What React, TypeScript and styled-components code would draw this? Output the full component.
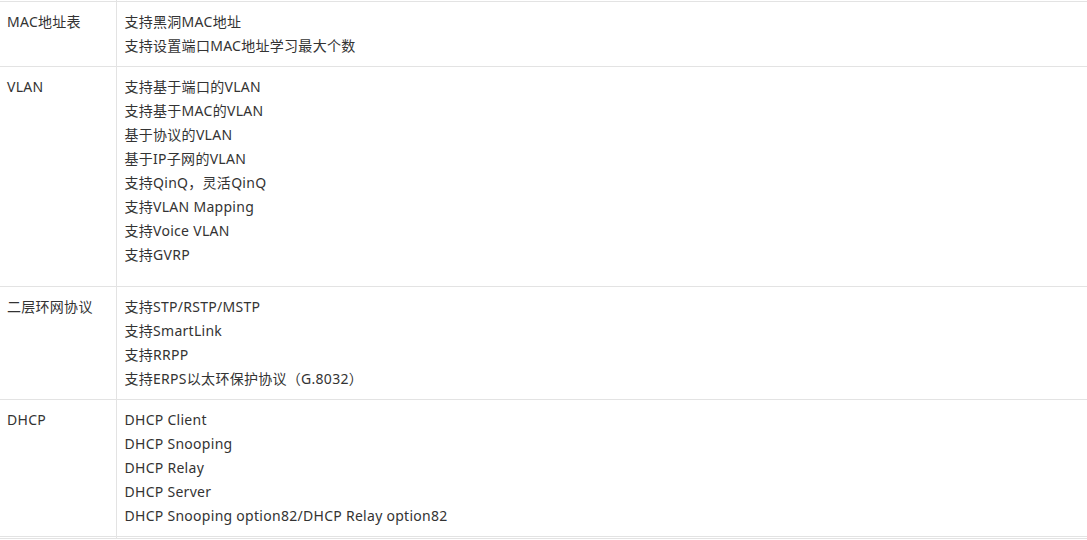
import styled, { createGlobalStyle } from "styled-components";

const GlobalStyle = createGlobalStyle`
  html, body {
    margin: 0;
    padding: 0;
    background: #fff;
  }
  body {
    font-family: "Noto Sans", "Noto Sans CJK SC", sans-serif;
    font-size: 14px;
    letter-spacing: 0.28px;
    color: #333;
  }
`;

const SpecTable = styled.table`
  width: 100%;
  margin-top: -1px;
  border-collapse: collapse;
  table-layout: fixed;
`;

const Row = styled.tr<{ $extra?: number }>`
  td {
    padding-bottom: ${(p) => 8 + (p.$extra ?? 0)}px;
  }
`;

const SpacerRow = styled.tr`
  height: 1px;
  td {
    padding: 0;
    height: 1px;
  }
`;

const NameCell = styled.td`
  width: 116px;
  box-sizing: border-box;
  padding: 8px 6px 8px 7px;
  vertical-align: top;
  line-height: 24px;
  border-top: 1px solid #e3e3e3;
  border-bottom: 1px solid #e3e3e3;
  border-right: 1px solid #e3e3e3;
`;

const ValueCell = styled.td`
  padding: 8px 8px 8px 8px;
  vertical-align: top;
  line-height: 24px;
  border-top: 1px solid #e3e3e3;
  border-bottom: 1px solid #e3e3e3;
`;

const Line = styled.div`
  white-space: nowrap;
`;

interface Spec {
  name: string;
  items: string[];
  extra?: number;
}

const specs: Spec[] = [
  {
    name: "MAC地址表",
    items: ["支持黑洞MAC地址", "支持设置端口MAC地址学习最大个数"],
  },
  {
    name: "VLAN",
    items: [
      "支持基于端口的VLAN",
      "支持基于MAC的VLAN",
      "基于协议的VLAN",
      "基于IP子网的VLAN",
      "支持QinQ，灵活QinQ",
      "支持VLAN Mapping",
      "支持Voice VLAN",
      "支持GVRP",
    ],
    extra: 11,
  },
  {
    name: "二层环网协议",
    items: [
      "支持STP/RSTP/MSTP",
      "支持SmartLink",
      "支持RRPP",
      "支持ERPS以太环保护协议（G.8032）",
    ],
  },
  {
    name: "DHCP",
    items: [
      "DHCP Client",
      "DHCP Snooping",
      "DHCP Relay",
      "DHCP Server",
      "DHCP Snooping option82/DHCP Relay option82",
    ],
  },
];

export default function App() {
  return (
    <>
      <GlobalStyle />
      <SpecTable>
        <tbody>
          <SpacerRow>
            <NameCell />
            <ValueCell />
          </SpacerRow>
          {specs.map((spec) => (
            <Row key={spec.name} $extra={spec.extra}>
              <NameCell>{spec.name}</NameCell>
              <ValueCell>
                {spec.items.map((item) => (
                  <Line key={item}>{item}</Line>
                ))}
              </ValueCell>
            </Row>
          ))}
          <SpacerRow>
            <NameCell />
            <ValueCell />
          </SpacerRow>
        </tbody>
      </SpecTable>
    </>
  );
}
